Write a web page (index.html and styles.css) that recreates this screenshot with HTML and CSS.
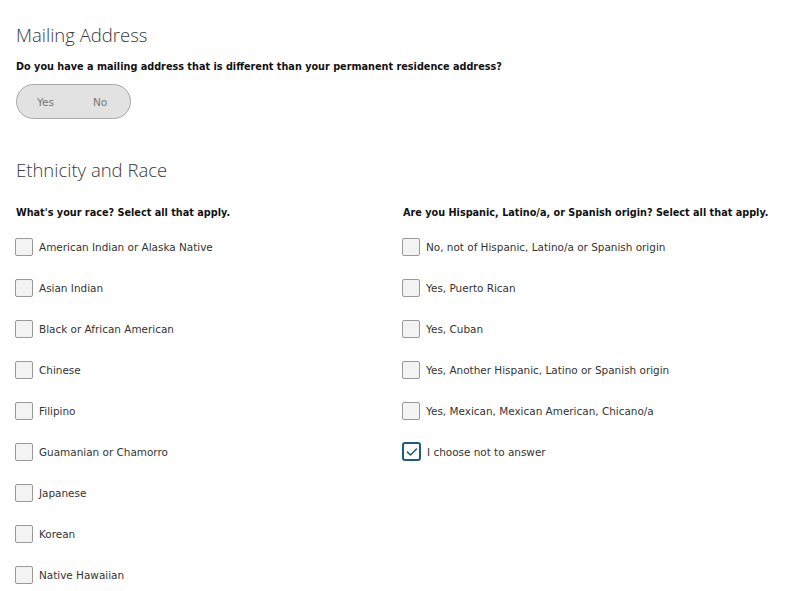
FILE: index.html
```html
<!DOCTYPE html>
<html>
<head>
<meta charset="utf-8">
<link rel="stylesheet" href="styles.css">
</head>
<body>
<div class="page">
  <section class="section">
    <h2 class="heading">Mailing Address</h2>
    <p class="question">Do you have a mailing address that is different than your permanent residence address?</p>
    <div class="toggle"><span class="toggle-opt">Yes</span><span class="toggle-opt">No</span></div>
  </section>
  <section class="section eth">
    <h2 class="heading">Ethnicity and Race</h2>
    <div class="cols">
      <div class="col">
        <p class="question">What's your race? Select all that apply.</p>
        <ul class="list">
          <li class="item"><span class="box"></span><span class="label">American Indian or Alaska Native</span></li>
          <li class="item"><span class="box"></span><span class="label">Asian Indian</span></li>
          <li class="item"><span class="box"></span><span class="label">Black or African American</span></li>
          <li class="item"><span class="box"></span><span class="label">Chinese</span></li>
          <li class="item"><span class="box"></span><span class="label">Filipino</span></li>
          <li class="item"><span class="box"></span><span class="label">Guamanian or Chamorro</span></li>
          <li class="item"><span class="box"></span><span class="label">Japanese</span></li>
          <li class="item"><span class="box"></span><span class="label">Korean</span></li>
          <li class="item"><span class="box"></span><span class="label">Native Hawaiian</span></li>
        </ul>
      </div>
      <div class="col">
        <p class="question">Are you Hispanic, Latino/a, or Spanish origin? Select all that apply.</p>
        <ul class="list">
          <li class="item"><span class="box"></span><span class="label">No, not of Hispanic, Latino/a or Spanish origin</span></li>
          <li class="item"><span class="box"></span><span class="label">Yes, Puerto Rican</span></li>
          <li class="item"><span class="box"></span><span class="label">Yes, Cuban</span></li>
          <li class="item"><span class="box"></span><span class="label">Yes, Another Hispanic, Latino or Spanish origin</span></li>
          <li class="item"><span class="box"></span><span class="label">Yes, Mexican, Mexican American, Chicano/a</span></li>
          <li class="item"><span class="box checked"><svg width="12" height="10" viewBox="0 0 12 10"><path d="M1.5 5.2 L4.5 8 L10.5 2" fill="none" stroke="#1f5a85" stroke-width="1.6" stroke-linecap="round" stroke-linejoin="round"/></svg></span><span class="label">I choose not to answer</span></li>
        </ul>
      </div>
    </div>
  </section>
</div>
</body>
</html>
```
FILE: styles.css
```css
html, body { margin: 0; padding: 0; background: #fff; }
body { font-family: "DejaVu Sans", "Open Sans", sans-serif; color: #222; }
.page { padding: 24px 16px 0 16px; }
.section { margin: 0; }
.heading { font-weight: 300; font-size: 18.5px; color: #3a3a3a; margin: 0; line-height: 22px; font-family: "Open Sans", sans-serif; }
.question { font-weight: bold; font-size: 9.7px; margin: 0; color: #111; line-height: 14px; }
.section > .question { margin-top: 14px; }
.toggle { margin-top: 10px; width: 113px; height: 33px; box-sizing: content-box; border: 1px solid #a8a8a8; border-radius: 18px; background: #e2e2e2; display: flex; align-items: center; }
.toggle-opt { font-size: 10.5px; color: #777; }
.toggle-opt:first-child { margin-left: 20px; }
.toggle-opt + .toggle-opt { margin-left: 39px; }
.eth { margin-top: 40px; }
.cols { display: grid; grid-template-columns: 387px 1fr; margin-top: 25px; }
.list { list-style: none; margin: 6px 0 0 -1px; padding: 0; }
.item { display: flex; align-items: center; height: 41px; }
.box { width: 16px; height: 16px; border: 1px solid #999; border-radius: 2px; background: #f3f3f3; flex: none; display: flex; align-items: center; justify-content: center; }
.box.checked { width: 15px; height: 15px; border: 2px solid #1f5a85; border-radius: 3px; background: #fff; }
.label { margin-left: 6px; font-size: 10.45px; color: #333; }
```
